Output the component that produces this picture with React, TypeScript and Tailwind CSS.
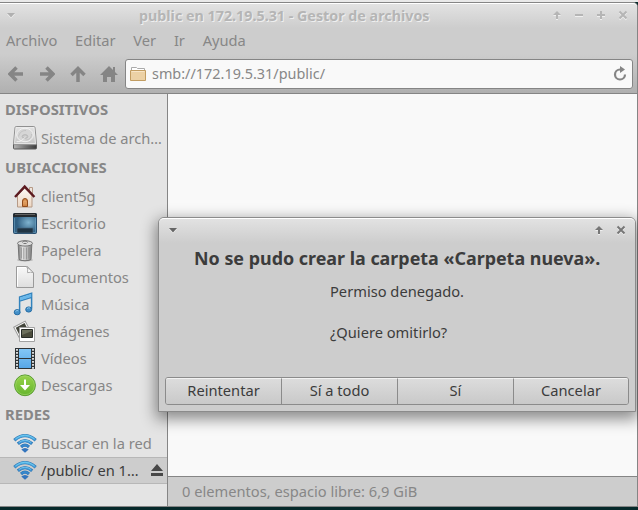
import type { ReactNode } from "react";

function Svg({ children, w = 24, h = 24, className = "" }: { children: ReactNode; w?: number; h?: number; className?: string }) {
  return (
    <svg width={w} height={h} viewBox={`0 0 ${w} ${h}`} className={`shrink-0 ${className}`} fill="none">
      {children}
    </svg>
  );
}

const DiskIcon = () => (
  <Svg>
    <defs>
      <linearGradient id="disk" x1="0" y1="0" x2="0" y2="1"><stop stopColor="#e2e2e2" /><stop offset="1" stopColor="#c6c6c6" /></linearGradient>
      <linearGradient id="diskf" x1="0" y1="0" x2="1" y2="0"><stop stopColor="#b5b5b5" /><stop offset="0.5" stopColor="#777" /><stop offset="1" stopColor="#3c3c3c" /></linearGradient>
    </defs>
    <path d="M.5 18v4q0 1 1 1h21q1 0 1-1v-4z" fill="url(#diskf)" stroke="#5a5a5a" />
    <path d="M3.2 .5h17.6q1 0 1.2 1l1.5 16q0 1.2-1 1.2h-21q-1 0-1-1.2L2 1.5q.2-1 1.2-1z" fill="url(#disk)" stroke="#909090" />
    <path d="M3 1.6h18l1.5 15.9h-21z" stroke="#f0f0f0" strokeWidth=".7" />
    <ellipse cx="12" cy="9" rx="8.3" ry="6.7" fill="#d6d6d6" stroke="#f7f7f7" strokeWidth=".8" />
    <path d="M5.5 10.5c1-4 3.5-6 7.5-6M18.5 8c0 4-2.5 6-6 6" stroke="#bdbdbd" strokeWidth=".8" />
    <ellipse cx="12" cy="10.5" rx="2.8" ry="1.8" fill="#cecece" stroke="#a9a9a9" strokeWidth=".7" />
    <path d="M3.5 15.5h4l5-4.5" stroke="#f4f4f4" strokeWidth=".8" />
  </Svg>
);
const HouseIcon = () => (
  <Svg>
    <defs><linearGradient id="house" x1="0" y1="0" x2="0" y2="1"><stop stopColor="#fdfaf6" /><stop offset="1" stopColor="#ecd6c2" /></linearGradient></defs>
    <path d="M16.5 3.5h3v7h-3z" fill="#efe5dc" stroke="#b69a86" />
    <path d="M4.5 11 11.5 4l7.5 7v12H4.5z" fill="url(#house)" stroke="#b69a86" />
    <path d="M9.5 22.5V17q0-2.500 2.500-2.500t2.500 2.500v5.500z" fill="#d18645" stroke="#914d1d" />
    <path d="M11 20.5V17h2v3.500" stroke="#e9ae74" />
    <path d="m2 13 9.700-10.400L21.400 13" stroke="#5c1a20" strokeWidth="2.4" />
  </Svg>
);
const DesktopIcon = () => (
  <Svg>
    <defs><radialGradient id="desk" cx="65%" cy="45%"><stop stopColor="#7fb3cf" /><stop offset="1" stopColor="#316083" /></radialGradient></defs>
    <rect x=".5" y="2.5" width="23" height="20" rx="1" fill="url(#desk)" stroke="#264c6d" />
    <path d="M0 4q0-2 2-2h20q2 0 2 2v2H0z" fill="#252a2e" /><path d="M2 3.500h20" stroke="#626262" />
    <path d="M1.500 7v14.500h21V7" stroke="#70a5c5" opacity=".6" />
    <path d="M4 22v-5h16v5z" fill="#203443" stroke="#476c84" strokeWidth=".7" />
  </Svg>
);
const TrashIcon = () => (
  <Svg>
    <defs><linearGradient id="trash" x1="0" x2="1"><stop stopColor="#747474" /><stop offset=".35" stopColor="#ececec" /><stop offset=".65" stopColor="#bdbdbd" /><stop offset="1" stopColor="#7b7b7b" /></linearGradient></defs>
    <ellipse cx="12" cy="22" rx="8" ry="1.5" fill="#b5b5b5" />
    <path d="M5.200 6.500h13.600l-.8 14.800q-1 1.400-6 1.400t-6-1.400z" fill="url(#trash)" stroke="#747474" />
    <path d="M8.300 9.500v11m2.500-11v12m2.600-12v12m2.500-12v11" stroke="#858585" strokeWidth=".8" />
    <ellipse cx="12" cy="5.4" rx="7.5" ry="2.7" fill="#dcdcdc" stroke="#747474" />
    <path d="M9.500 4.500q0-1.500 2.500-1.500t2.500 1.500" stroke="#777" />
    <path d="M10.500 5.500h3" stroke="#777" />
  </Svg>
);
const DocumentIcon = () => (
  <Svg>
    <defs><linearGradient id="doc" x1="0" y1="0" x2="0" y2="1"><stop stopColor="#f9f9f9" /><stop offset="1" stopColor="#dedede" /></linearGradient></defs>
    <path d="M3.500 1.500h10.800l6.200 6.200v14.800h-17z" fill="url(#doc)" stroke="#9a9a9a" />
    <path d="M4.500 21.500v-19h9" stroke="white" />
    <path d="M13.500 1.500q2 2 1 6.200 3-1 6 0z" fill="#fdfdfd" stroke="#aaa" />
  </Svg>
);
const MusicIcon = () => (
  <Svg>
    <path d="M6.600 19V5l12-3.700v15.500M6.600 9l12-3.700" stroke="#3283bd" strokeWidth="1.5" />
    <path d="M7.200 5.400 18.200 2v3L7.200 8.500z" fill="#69b8eb" />
    <ellipse cx="4.2" cy="20.2" rx="3" ry="2.6" fill="#438fc8" stroke="#266da4" />
    <ellipse cx="15.7" cy="17.5" rx="3" ry="2.6" fill="#438fc8" stroke="#266da4" />
    <path d="M2.500 19.300q1.500-1.300 3-.5m8.500-2.200q1.500-1.300 3-.5" stroke="#8bc7ed" />
  </Svg>
);
const ImagesIcon = () => (
  <Svg>
    <g transform="rotate(-28 9 10)"><path d="M2.500 4.500h13v13h-13z" fill="#fafafa" stroke="#999" /><path d="M4 6h10v8H4z" fill="#42453b" /></g>
    <path d="M6.500 8.500h15v14h-15z" fill="#fff" stroke="#a2a2a2" />
    <path d="M8.500 10.500h11v8h-11z" fill="#6d705d" stroke="#292d28" />
    <path d="m9 16 10-4v6H9z" fill="#4b4c3c" />
  </Svg>
);
const VideoIcon = () => (
  <Svg>
    <defs><linearGradient id="vid" x1="0" y1="0" x2="0" y2="1"><stop stopColor="#83c7f7" /><stop offset="1" stopColor="#57a7e8" /></linearGradient></defs>
    <path d="M2 2h20v21H2z" fill="#2f3437" />
    <path d="M6 3h12v9H6zm0 10h12v9H6z" fill="url(#vid)" />
    <path d="M4 3v20M20 3v20" stroke="#eee" strokeWidth="1.8" strokeDasharray="1.8 1.2" />
  </Svg>
);
const DownloadIcon = () => (
  <Svg>
    <defs><linearGradient id="down" x1="0" y1="0" x2="0" y2="1"><stop stopColor="#98d34d" /><stop offset="1" stopColor="#65b52d" /></linearGradient></defs>
    <circle cx="12" cy="12.3" r="10.4" fill="url(#down)" stroke="#579c2c" />
    <circle cx="12" cy="12.3" r="9.4" stroke="#a4d971" strokeWidth=".6" />
    <path d="M11 6.500h2V12h4l-5 5.500L7 12h4z" fill="white" />
  </Svg>
);
const WifiIcon = () => (
  <Svg>
    <defs><linearGradient id="wifi" x1="0" y1="2" x2="0" y2="22" gradientUnits="userSpaceOnUse"><stop stopColor="#50b8e6" /><stop offset="1" stopColor="#286cc0" /></linearGradient></defs>
    <path d="M1.300 9.200Q12-.1 22.700 9.200M4.800 12.800q7.200-6.300 14.400 0M8 16q4-3.600 8 0" stroke="#347bb7" strokeWidth="3.2" />
    <path d="M1.800 8.900Q12 .4 22.200 8.900M5.300 12.500q6.700-5.600 13.400 0M8.500 15.700q3.500-3 7 0" stroke="url(#wifi)" strokeWidth="2" />
    <path d="M2.500 7.900Q12 .5 21.500 7.900M6 11.400q6-4.400 12 0" stroke="#83d2f3" strokeWidth=".7" />
    <path d="m12 21.800-3.700-3.300q3.700-3 7.400 0z" fill="#3475bd" />
  </Svg>
);

function TitleGlyph({ kind, color }: { kind: "menu" | "up" | "minus" | "plus" | "close"; color: string }) {
  const paths = {
    menu: <path d="M1 3h8L5 7.500z" fill="currentColor" />,
    up: <path d="M5 1 1 5h3v4h2V5h3z" fill="currentColor" />,
    minus: <path d="M1 4h8v2H1z" fill="currentColor" />,
    plus: <path d="M4 1h2v3h3v2H6v3H4V6H1V4h3z" fill="currentColor" />,
    close: <path d="m1.500 1.500 7 7m0-7-7 7" stroke="currentColor" strokeWidth="2" />,
  };
  return <Svg w={10} h={10} className={`drop-shadow-[0_1px_0_#efefef] ${color}`}>{paths[kind]}</Svg>;
}

function Heading({ children }: { children: string }) {
  return <h2 className="flex h-[31px] items-center pb-[2px] pl-[5px] text-[14.8px] font-bold text-[#878787]">{children}</h2>;
}

function Place({ icon, label, selected = false }: { icon: ReactNode; label: string; selected?: boolean }) {
  return (
    <div className={`flex h-[27px] items-center gap-1 border-y pl-[13px] ${selected ? "border-[#b7b7b7] bg-[#cdcdcd] text-[#3c3c3c]" : "border-transparent text-[#878787]"}`}>
      <div className="mb-px">{icon}</div>
      <span className="pb-[2px] whitespace-nowrap">{label}</span>
      {selected && (
        <Svg w={12} h={12} className="mr-1 mb-px ml-auto">
          <path d="M6 0 12 7H0zM0 9h12v3H0z" fill="#484848" />
        </Svg>
      )}
    </div>
  );
}

function Dialog() {
  const buttons = ["Reintentar", "Sí a todo", "Sí", "Cancelar"];
  return (
    <section className="absolute top-[217px] left-[158px] flex h-[195px] w-[478px] flex-col rounded-t-[6px] border border-[#8b8b8b] bg-[#cdcdcd] text-[#3c3c3c] shadow-[0_5px_15px_2px_rgba(0,0,0,0.45)]">
      <header className="flex h-[25px] items-center rounded-t-[5px] border-t border-white bg-linear-to-b from-[#e2e2e2] to-[#cdcdcd] px-[9px] pb-[2px]">
        <TitleGlyph kind="menu" color="text-[#666]" />
        <div className="ml-auto flex gap-3"><TitleGlyph kind="up" color="text-[#777]" /><TitleGlyph kind="close" color="text-[#777]" /></div>
      </header>
      <h1 className="mt-[3px] pl-[35px] text-[17.9px] leading-6 font-bold whitespace-nowrap">No se pudo crear la carpeta «Carpeta nueva».</h1>
      <div className="mt-[11px] pl-[171px] leading-5">
        <p>Permiso denegado.</p>
        <p className="mt-[21px]">¿Quiere omitirlo?</p>
      </div>
      <div className="mx-[6px] mt-auto mb-[6px] flex h-7 rounded-[3px] border border-[#8b8b8b]">
        {buttons.map((b) => (
          <button key={b} className="w-[116px] border-t border-r border-t-[#f2f2f2] border-r-[#8b8b8b] bg-linear-to-b from-[#dcdcdc] to-[#c9c9c9] pb-[3px] first:rounded-l-[2px] last:w-[114px] last:rounded-r-[2px] last:border-r-0">{b}</button>
        ))}
      </div>
    </section>
  );
}

export default function App() {
  return (
    <div className="relative flex h-[510px] w-[638px] flex-col overflow-hidden bg-[#06292a] pb-[3px] font-['Noto_Sans',sans-serif] text-[14.67px] leading-5 text-[#878787]">
      <div className="h-[2px] shrink-0 bg-[#e9e9e9]" />
      <main className="flex min-h-0 flex-1 flex-col rounded-tr-[5px] border-t border-r border-b border-[#858585] bg-[#cdcdcd]">
        <header className="flex h-[25px] shrink-0 items-center rounded-tr-[4px] border-t border-white bg-linear-to-b from-[#e2e2e2] to-[#cdcdcd] pr-[9px] pb-[2px] pl-[6px]">
          <TitleGlyph kind="menu" color="text-[#b0b0b0]" />
          <h1 className="mt-[2px] ml-[123px] text-[14.3px] font-bold whitespace-nowrap text-[#b5b5b5] [text-shadow:1px_1px_0_#efefef]">public en 172.19.5.31 - Gestor de archivos</h1>
          <div className="ml-auto flex gap-3">
            <TitleGlyph kind="up" color="text-[#b5b5b5]" /><TitleGlyph kind="minus" color="text-[#b5b5b5]" /><TitleGlyph kind="plus" color="text-[#b5b5b5]" /><TitleGlyph kind="close" color="text-[#b5b5b5]" />
          </div>
        </header>
        <nav className="flex h-[26px] shrink-0 items-center gap-[17.75px] pb-[2px] pl-[6px]">
          {["Archivo", "Editar", "Ver", "Ir", "Ayuda"].map((m) => <span key={m}>{m}</span>)}
        </nav>
        <div className="flex h-10 shrink-0 items-center border-b border-[#858585] bg-linear-to-b from-[#cdcdcd] to-[#b0b0b0] pr-1 pl-2">
          <Svg w={15} h={16}><path d="M8.500 1.500 2 8l6.500 6.500M2 8h13" stroke="#858585" strokeWidth="3.5" /></Svg>
          <Svg w={15} h={16} className="ml-[17px]"><path d="M6.500 1.500 13 8l-6.500 6.500M13 8H0" stroke="#858585" strokeWidth="3.5" /></Svg>
          <Svg w={16} h={16} className="ml-[15px]"><path d="M1.500 9 8 2.500 14.500 9M8 2.500V16" stroke="#858585" strokeWidth="3.5" /></Svg>
          <Svg w={18} h={16} className="ml-[14px]"><path d="M9 0 0 9h3v7h4v-5h4v5h4V9h3l-3-3V1h-2v3z" fill="#858585" /></Svg>
          <div className="ml-[7px] flex h-[30px] flex-1 items-center rounded-[3px] border border-[#858585] bg-[#f9f9f9] pr-[5px] pl-1">
            <Svg w={16} h={14}>
              <path d="M1.500 6V.5h5l1 1h7V6" fill="#fff" stroke="#aaa" />
              <path d="M.5 3.500h15v10H.5z" fill="#ecd1a5" stroke="#c29d62" />
              <path d="M1.500 4.500h13" stroke="#f8e5c7" />
            </Svg>
            <span className="ml-[6px] text-[14.42px]">smb://172.19.5.31/public/</span>
            <Svg w={14} h={15} className="mb-px ml-auto"><path d="M8.500 3.500H7a5 5 0 1 0 5 5" stroke="#858585" strokeWidth="2.2" /><path d="M7 0v7l5-3.500z" fill="#858585" /></Svg>
          </div>
        </div>
        <div className="flex min-h-0 flex-1">
          <aside className="w-[168px] shrink-0 border-r border-[#858585] bg-[#e4e4e4]">
            <Heading>DISPOSITIVOS</Heading>
            <Place icon={<DiskIcon />} label="Sistema de arch…" />
            <Heading>UBICACIONES</Heading>
            <Place icon={<HouseIcon />} label="client5g" />
            <Place icon={<DesktopIcon />} label="Escritorio" />
            <Place icon={<TrashIcon />} label="Papelera" />
            <Place icon={<DocumentIcon />} label="Documentos" />
            <Place icon={<MusicIcon />} label="Música" />
            <Place icon={<ImagesIcon />} label="Imágenes" />
            <Place icon={<VideoIcon />} label="Vídeos" />
            <Place icon={<DownloadIcon />} label="Descargas" />
            <Heading>REDES</Heading>
            <Place icon={<WifiIcon />} label="Buscar en la red" />
            <Place icon={<WifiIcon />} label="/public/ en 1…" selected />
          </aside>
          <section className="flex flex-1 flex-col bg-[#f9f9f9]">
            <footer className="mt-auto flex h-[30px] items-center border-t border-[#858585] bg-[#cdcdcd] pb-[2px] pl-[14px]">0 elementos, espacio libre: 6,9 GiB</footer>
          </section>
        </div>
      </main>
      <Dialog />
    </div>
  );
}
